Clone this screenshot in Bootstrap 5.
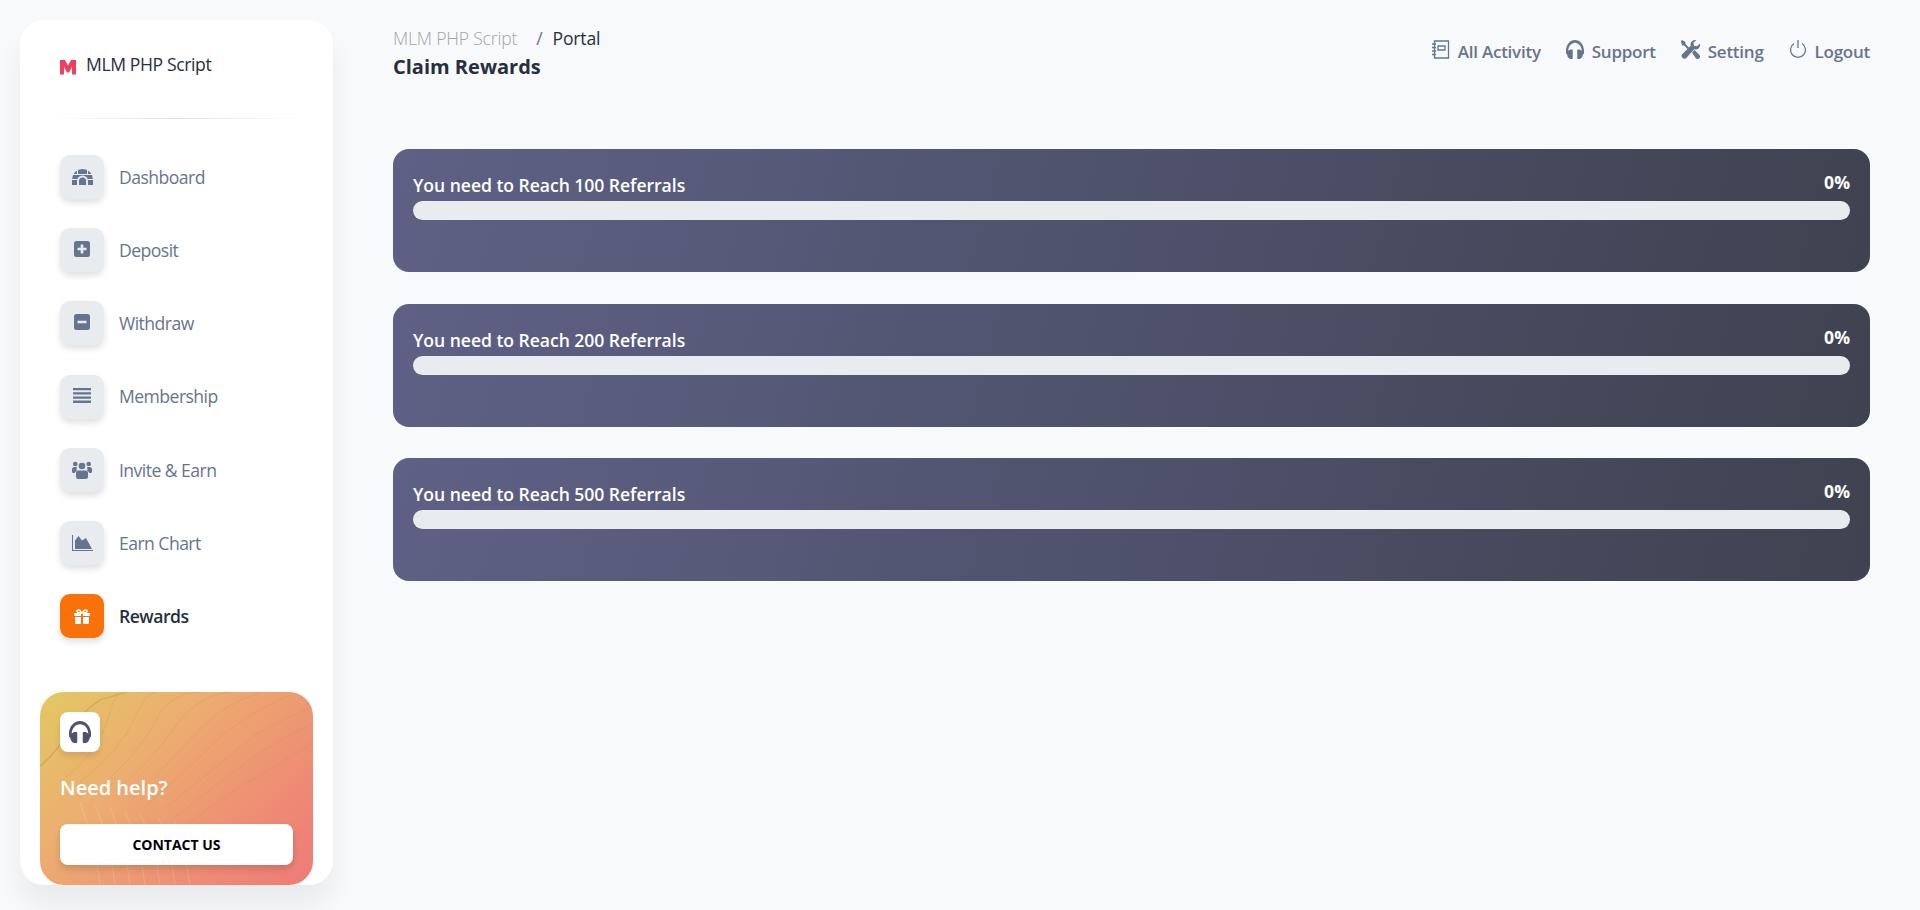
<!DOCTYPE html>
<html lang="en">
<head>
  <meta charset="UTF-8">
  <title>Claim Rewards</title>
  <meta name="viewport" content="width=device-width, initial-scale=1">
  <link href="https://cdn.jsdelivr.net/npm/bootstrap@5.3.3/dist/css/bootstrap.min.css" rel="stylesheet">
  <style>
    html, body { height: 910px; overflow: hidden; }
    body {
      background: #f8f9fa;
      font-family: "Open Sans", sans-serif;
      color: #344767;
    }
    .side-panel {
      width: 313px;
      height: 865px;
      margin: 20px 60px 0 20px;
      background: #fff;
      border-radius: 24px;
      box-shadow: 0 20px 27px rgba(0, 0, 0, .06);
      flex-shrink: 0;
    }
    .brand-row { height: 98px; padding: 32px 0 0 40px; }
    .brand-mark { width: 16px; height: 16px; margin-right: 10px; margin-top: 7px; }
    .brand-text { font-size: 17.600px; font-weight: 500; color: #252f40; letter-spacing: -.4px; line-height: 24px; }
    .side-rule {
      height: 1px;
      margin: 0 20px;
      background: linear-gradient(to right, rgba(0,0,0,0), rgba(0,0,0,.12), rgba(0,0,0,0));
    }
    .side-menu { padding: 36px 0 0 40px; gap: 29.200px; }
    .side-link { height: 44px; color: #67748e; font-size: 17.600px; font-weight: 400; letter-spacing: -.55px; text-decoration: none; }
    .side-link.current { color: #252f40; font-weight: 600; letter-spacing: -.5px; }
    .tile {
      width: 44px; height: 44px;
      border-radius: 10px;
      background: #e9ecef;
      box-shadow: 0 4px 6px rgba(0,0,0,.12);
      margin-right: 15px;
      flex-shrink: 0;
    }
    .current .tile { background: #f97109; }
    .tile svg { fill: #67748e; }
    .current .tile svg { fill: #fff; }
    .icon-up { margin-top: -3px; }
    .help-box {
      position: relative;
      overflow: hidden;
      width: 273px;
      height: 193px;
      margin: 54px 0 0 20px;
      border-radius: 24px;
      padding: 20px;
      background: linear-gradient(135deg, #e3c863 0%, #ecae70 35%, #ee8b74 75%, #ef7a78 100%);
    }
    .contours { position: absolute; inset: 0; width: 100%; height: 100%; }
    .help-inner { position: relative; }
    .help-icon {
      width: 40px; height: 40px;
      border-radius: 8px;
      background: #fff;
      box-shadow: 0 4px 6px rgba(0,0,0,.1);
    }
    .help-title { font-size: 20px; font-weight: 600; color: #fff; line-height: 27px; margin: 22px 0 23px; }
    .help-btn {
      display: block;
      height: 41px;
      line-height: 41px;
      padding: 0;
      width: 233px;
      background: #fff;
      border: 0;
      border-radius: 8px;
      color: #000;
      font-size: 14px;
      font-weight: 700;
      box-shadow: 0 4px 7px rgba(0,0,0,.14);
    }
    .main-area { width: 1477px; }
    .top-bar { height: 149px; padding-top: 26px; }
    .crumb-line { font-size: 17.600px; line-height: 24px; font-weight: 400; }
    .crumb-root { color: #a0a4ad; font-weight: 300; letter-spacing: -.2px; }
    .crumb-sep { color: #67748e; margin: 0 10px 0 19px; }
    .crumb-here { color: #252f40; font-weight: 400; letter-spacing: -.2px; }
    .page-title { font-size: 20px; font-weight: 700; color: #252f40; line-height: 28px; margin: 3px 0 0; }
    .top-links { gap: 25px; padding-top: 14px; }
    .top-link { color: #67748e; font-size: 17px; font-weight: 600; letter-spacing: -.25px; line-height: 24px; text-decoration: none; }
    .top-link svg { fill: #67748e; margin-right: 8px; margin-top: -6px; }
    .reward-panel {
      height: 123px;
      margin-bottom: 31.500px;
      padding: 20px;
      border-radius: 16px;
      color: #fff;
      background: linear-gradient(285deg, #3f4250 0%, #5e6185 100%);
    }
    .reward-head { height: 32px; font-weight: 600; font-size: 17.600px; line-height: 22px; }
    .reward-name { padding-top: 5px; letter-spacing: -.05px; }
    .reward-pct { font-weight: 700; margin-top: 2px; }
    .reward-track { height: 19px; background: #e9ecef; border-radius: 10px; }
  </style>
</head>
<body class="d-flex">

  <aside class="side-panel">
    <div class="brand-row d-flex align-items-start">
      <svg class="brand-mark" viewBox="0 0 16 16"><path fill="#f0405f" d="M0 15.500V1h5L8 6.500 11 1h5v14.500h-4V8L9 13.500H7L4 8v7.500z"/></svg>
      <span class="brand-text">MLM PHP Script</span>
    </div>
    <div class="side-rule"></div>

    <nav class="side-menu d-flex flex-column">
      <a class="side-link d-flex align-items-center" href="#">
        <span class="tile d-flex align-items-center justify-content-center">
          <svg width="21" height="16" viewBox="0 0 21 16"><path d="M0 16V10.500a10.500 10.500 0 0 1 21 0V16h-5v-4a5.500 5.500 0 0 0-11 0v4z"/><path d="M7 16v-4a3.500 3.500 0 0 1 7 0v4z"/><path fill="none" stroke="#e9ecef" d="M1 5.500h19M0 10.500h5M16 10.500h5M5.500 0v5.500M15.500 0v5.500"/></svg>
        </span>Dashboard
      </a>
      <a class="side-link d-flex align-items-center" href="#">
        <span class="tile d-flex align-items-center justify-content-center">
          <svg class="icon-up" width="16" height="16" viewBox="0 0 16 16"><path fill-rule="evenodd" d="M2.500 0h11A2.500 2.500 0 0 1 16 2.500v11a2.500 2.500 0 0 1-2.500 2.500h-11A2.500 2.500 0 0 1 0 13.500v-11A2.500 2.500 0 0 1 2.500 0zM6.700 3.500v3.200H3.500v2.600h3.200v3.200h2.600V9.300h3.200V6.700H9.300V3.500z"/></svg>
        </span>Deposit
      </a>
      <a class="side-link d-flex align-items-center" href="#">
        <span class="tile d-flex align-items-center justify-content-center">
          <svg class="icon-up" width="16" height="16" viewBox="0 0 16 16"><path fill-rule="evenodd" d="M2.500 0h11A2.500 2.500 0 0 1 16 2.500v11a2.500 2.500 0 0 1-2.500 2.500h-11A2.500 2.500 0 0 1 0 13.500v-11A2.500 2.500 0 0 1 2.500 0zM3.500 6.700v2.600h9V6.700z"/></svg>
        </span>Withdraw
      </a>
      <a class="side-link d-flex align-items-center" href="#">
        <span class="tile d-flex align-items-center justify-content-center">
          <svg class="icon-up" width="18" height="15" viewBox="0 0 18 15"><path d="M0 0h18v2.300H0zM0 4.200h18v2.300H0zM0 8.400h18v2.300H0zM0 12.600h18V15H0z"/></svg>
        </span>Membership
      </a>
      <a class="side-link d-flex align-items-center" href="#">
        <span class="tile d-flex align-items-center justify-content-center">
          <svg width="20" height="18" viewBox="0 0 20 18"><circle cx="10" cy="5" r="3.300"/><circle cx="3.300" cy="3" r="2.300"/><circle cx="16.700" cy="3" r="2.300"/><path d="M0 8.500Q0 6 2.500 6H5Q4 8 5 9.500 3 10.500 2.800 12H1.500Q0 12 0 10.500zM20 8.500Q20 6 17.500 6H15Q16 8 15 9.500 17 10.500 17.200 12h1.300Q20 12 20 10.500zM6.500 9.500h7q2.500 0 2.500 2.500v3.500q0 2.500-2.500 2.500h-7Q4 18 4 15.500V12q0-2.500 2.500-2.500z"/></svg>
        </span>Invite &amp; Earn
      </a>
      <a class="side-link d-flex align-items-center" href="#">
        <span class="tile d-flex align-items-center justify-content-center">
          <svg width="21" height="16" viewBox="0 0 21 16"><path d="M0 0h1v15h20v1H0z"/><path d="M3 14V5.500L6.500 1l3.500 4.500L14 3l6 11z"/></svg>
        </span>Earn Chart
      </a>
      <a class="side-link current d-flex align-items-center" href="#">
        <span class="tile d-flex align-items-center justify-content-center">
          <svg width="16" height="15" viewBox="0 0 16 15"><path d="M1 8h6v7H2.500Q1 15 1 13.500zM9 8h6v5.500q0 1.500-1.500 1.500H9zM0 4h7v3H0zM9 4h7v3H9z"/><path fill="none" stroke="#fff" stroke-width="1.500" d="M8 4L5.500 1.200Q3.500.4 3 2q0 2 5 2 5 0 5-2-.5-1.600-2.500-.8z"/></svg>
        </span>Rewards
      </a>
    </nav>

    <div class="help-box">
      <svg class="contours" viewBox="0 0 273 193" preserveAspectRatio="none" fill="none">
        <path stroke="#b98f3a" stroke-opacity=".45" stroke-width="1.200" d="M0 74Q15 62 27 42T60 8L87 0"/>
        <path stroke="#c9924a" stroke-opacity=".25" d="M20 90Q60 60 70 20T110 0M40 90Q80 60 95 25T135 0M60 95Q100 60 115 30T160 0M75 100Q115 65 135 35T190 0M90 110Q130 70 155 42T220 0M105 115Q150 75 175 50T250 3M120 120Q170 80 200 55T273 15M135 125Q180 90 210 68T273 32M150 130Q190 100 225 80T273 50"/>
        <path stroke="#fff" stroke-opacity=".16" d="M60 193Q55 150 40 110M75 193Q70 150 55 112M90 193Q85 150 70 115M105 193Q100 150 85 120M120 193Q115 150 100 122M135 193Q130 155 118 125M150 193Q145 160 135 130"/>
      </svg>
      <div class="help-inner">
        <div class="help-icon d-flex align-items-center justify-content-center">
          <svg width="22" height="22" viewBox="0 32 512 448" preserveAspectRatio="none"><path fill="#4f5273" d="M256 32C114.520 32 0 146.496 0 288v48a32 32 0 0 0 17.689 28.622l14.383 7.191C34.083 431.903 83.421 480 144 480h24c13.255 0 24-10.745 24-24V280c0-13.255-10.745-24-24-24h-24c-31.342 0-59.671 12.879-80 33.627V288c0-105.869 86.131-192 192-192s192 86.131 192 192v1.627C427.671 268.879 399.342 256 368 256h-24c-13.255 0-24 10.745-24 24v176c0 13.255 10.745 24 24 24h24c60.579 0 109.917-48.098 111.928-108.187l14.382-7.191A32 32 0 0 0 512 336v-48c0-141.504-114.520-256-256-256z"/></svg>
        </div>
        <div class="help-title">Need help?</div>
        <button class="help-btn text-center" type="button">CONTACT US</button>
      </div>
    </div>
  </aside>

  <main class="main-area">
    <header class="top-bar d-flex justify-content-between align-items-start">
      <div>
        <div class="crumb-line"><span class="crumb-root">MLM PHP Script</span><span class="crumb-sep">/</span><span class="crumb-here">Portal</span></div>
        <h6 class="page-title">Claim Rewards</h6>
      </div>
      <div class="top-links d-flex">
        <a class="top-link d-flex align-items-center" href="#">
          <svg width="18" height="19" viewBox="0 0 18 19"><path fill="none" stroke="#67748e" stroke-width="1.300" d="M2.500 1h14v17h-14zM6 6h7v4H6z"/><path fill="none" stroke="#67748e" stroke-width="1.300" d="M0 4h4M0 7.500h4M0 11h4M0 14.500h4"/></svg>All Activity
        </a>
        <a class="top-link d-flex align-items-center" href="#">
          <svg width="18" height="19" viewBox="0 32 512 448" preserveAspectRatio="none"><path d="M256 32C114.520 32 0 146.496 0 288v48a32 32 0 0 0 17.689 28.622l14.383 7.191C34.083 431.903 83.421 480 144 480h24c13.255 0 24-10.745 24-24V280c0-13.255-10.745-24-24-24h-24c-31.342 0-59.671 12.879-80 33.627V288c0-105.869 86.131-192 192-192s192 86.131 192 192v1.627C427.671 268.879 399.342 256 368 256h-24c-13.255 0-24 10.745-24 24v176c0 13.255 10.745 24 24 24h24c60.579 0 109.917-48.098 111.928-108.187l14.382-7.191A32 32 0 0 0 512 336v-48c0-141.504-114.520-256-256-256z"/></svg>Support
        </a>
        <a class="top-link d-flex align-items-center" href="#">
          <svg width="19" height="19" viewBox="0 0 19 19"><path d="M1 0l3.500 2v2l3.500 3.500-1.500 1.500L3 5.500H1L0 1zM14 0a4.500 4.500 0 0 0-4.300 5.800L.9 14.500a2.900 2.900 0 0 0 3.900 3.900l8.400-9.100A4.500 4.500 0 0 0 18.800 3.500L16 6.300l-3-.6-.6-3L15.300.2Q14.600 0 14 0zM11 12.500l2.500-2.500 5 5a2.500 2.500 0 0 1-3.500 3.500z"/></svg>Setting
        </a>
        <a class="top-link d-flex align-items-center" href="#">
          <svg width="18" height="18" viewBox="0 0 18 18"><path fill="none" stroke="#67748e" stroke-width="1.300" d="M5 3.500a7.500 7.500 0 1 0 8 0M9 0v8"/></svg>Logout
        </a>
      </div>
    </header>

    <section class="reward-panel">
      <div class="reward-head d-flex justify-content-between">
        <span class="reward-name">You need to Reach 100 Referrals</span>
        <span class="reward-pct">0%</span>
      </div>
      <div class="progress reward-track"><div class="progress-bar" role="progressbar" style="width: 0%"></div></div>
    </section>

    <section class="reward-panel">
      <div class="reward-head d-flex justify-content-between">
        <span class="reward-name">You need to Reach 200 Referrals</span>
        <span class="reward-pct">0%</span>
      </div>
      <div class="progress reward-track"><div class="progress-bar" role="progressbar" style="width: 0%"></div></div>
    </section>

    <section class="reward-panel">
      <div class="reward-head d-flex justify-content-between">
        <span class="reward-name">You need to Reach 500 Referrals</span>
        <span class="reward-pct">0%</span>
      </div>
      <div class="progress reward-track"><div class="progress-bar" role="progressbar" style="width: 0%"></div></div>
    </section>
  </main>

  <script src="https://cdn.jsdelivr.net/npm/bootstrap@5.3.3/dist/js/bootstrap.bundle.min.js"></script>
</body>
</html>
